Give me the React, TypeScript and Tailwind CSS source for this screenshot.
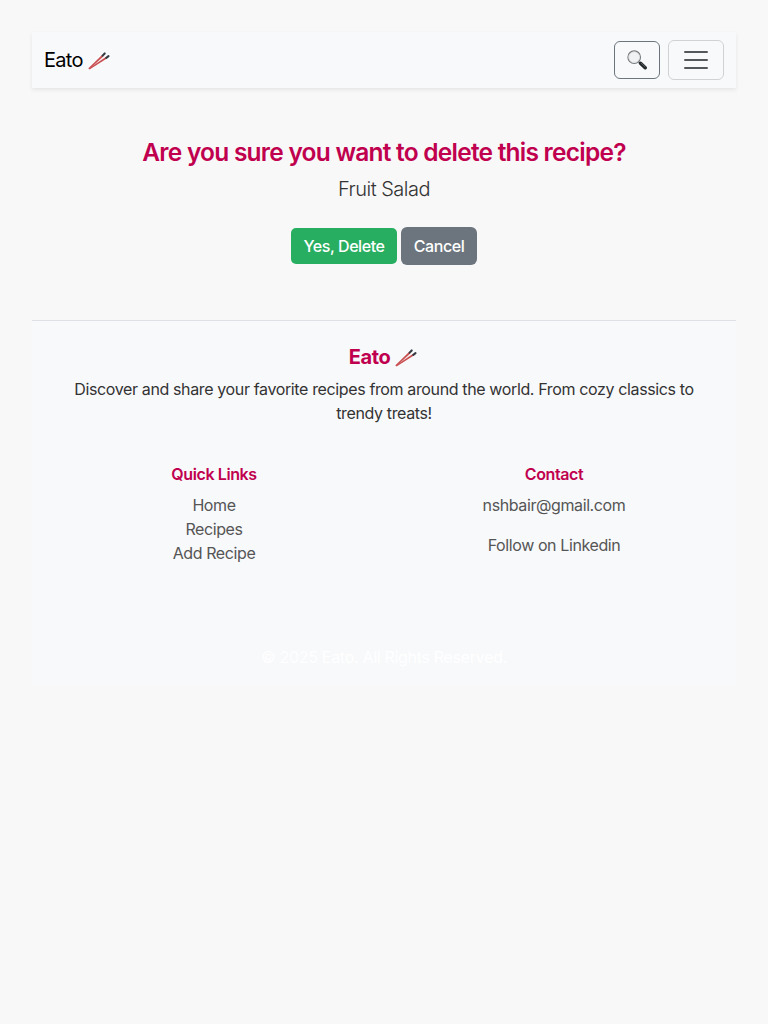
import React from "react";

function Chopsticks() {
  return (
    <svg className="inline-block h-6 w-6 shrink-0" viewBox="0 0 24 24" fill="none">
      <path d="M.4 20.3 14 7l1.6 1.3L1.2 21.2Z" fill="#c94f50" />
      <path d="M.7 20.6 17.8 8.9l1.1 1.7L1.5 21.5Z" fill="#c94f50" />
      <path d="M14.6 7.6 16.7 5.4" stroke="#343b42" strokeWidth="2.1" strokeLinecap="round" />
      <path d="M18.3 9.8 20.5 8.2" stroke="#343b42" strokeWidth="2.1" strokeLinecap="round" />
    </svg>
  );
}

function Magnifier() {
  return (
    <svg className="h-5 w-5" viewBox="0 0 20 20" fill="none">
      <path d="m11.6 11.8 2 1.9" stroke="#8a8c8e" strokeWidth="1.6" />
      <path d="m13.5 13.2 4.7 4.6" stroke="#23282b" strokeWidth="3.4" strokeLinecap="round" />
      <path d="m14.3 13.3 3.8 3.6" stroke="#687073" strokeWidth="0.7" strokeLinecap="round" />
      <circle cx="7.2" cy="7.2" r="6.3" fill="#f1f2f3" stroke="#75797c" strokeWidth="1.1" />
      <circle cx="7.2" cy="7.2" r="5.3" stroke="#d8dbdd" strokeWidth="0.7" />
    </svg>
  );
}

export default function App() {
  return (
    <div className="min-h-screen bg-[#f8f8f8] p-8 font-['Inter',sans-serif] text-base leading-6 text-[#333]">
      <nav className="flex h-14 items-center justify-between bg-[#f8f9fb] px-3 shadow-[0_2px_4px_rgba(0,0,0,0.08)]">
        <a href="#" className="flex items-center gap-[5px] text-[20px] leading-[30px] tracking-[-0.035em] text-black">
          <span>Eato</span>
          <Chopsticks />
        </a>
        <div className="flex items-center gap-2">
          <button aria-label="Search" className="flex h-[38px] w-[46px] items-center justify-center rounded-md border border-[#6c757d]">
            <Magnifier />
          </button>
          <button aria-label="Menu" className="flex h-10 w-14 items-center justify-center rounded-md border border-[#d0d3d6]">
            <svg className="h-[30px] w-[30px]" viewBox="0 0 30 30" stroke="#55585b" strokeWidth="2" strokeLinecap="round">
              <path d="M4 7h22M4 15h22M4 23h22" />
            </svg>
          </button>
        </div>
      </nav>

      <main className="flex flex-col items-center pt-[49px] text-center">
        <h2 className="mb-[6px] text-[24.5px] font-semibold leading-[31px] tracking-[-0.031em] text-[#c0004e]">
          Are you sure you want to delete this recipe?
        </h2>
        <p className="text-[20px] font-light leading-[30px] tracking-[-0.025em]">Fruit Salad</p>
        <div className="mt-[23px] flex items-center gap-1 font-medium tracking-[-0.027em] text-white">
          <button className="h-9 w-[106px] rounded-[5px] bg-[#27ae60]">Yes, Delete</button>
          <button className="h-[38px] w-[76px] rounded-md bg-[#6c757d]">Cancel</button>
        </div>
      </main>

      <footer className="mt-[55px] h-[365px] border-t border-[#dee2e6] bg-[#f8f9fb] px-3 pt-6 text-center">
        <h5 className="flex items-center justify-center gap-[5px] text-[20px] font-bold leading-6 tracking-[-0.02em] text-[#c0004e]">
          <span>Eato</span>
          <Chopsticks />
        </h5>
        <p className="mt-2 tracking-[-0.023em]">
          Discover and share your favorite recipes from around the world. From cozy classics to
          <br />
          trendy treats!
        </p>
        <div className="mt-10 grid grid-cols-2 tracking-[-0.025em] text-[#555]">
          <div>
            <h6 className="mb-[9px] font-semibold leading-[19px] text-[#c0004e]">Quick Links</h6>
            <ul>
              <li><a href="#">Home</a></li>
              <li><a href="#">Recipes</a></li>
              <li><a href="#">Add Recipe</a></li>
            </ul>
          </div>
          <div>
            <h6 className="mb-[9px] font-semibold leading-[19px] text-[#c0004e]">Contact</h6>
            <p className="mb-4">nshbair@gmail.com</p>
            <a href="#">Follow on Linkedin</a>
          </div>
        </div>
        <p className="mt-20 tracking-[-0.019em] text-white">© 2025 Eato. All Rights Reserved.</p>
      </footer>
    </div>
  );
}
